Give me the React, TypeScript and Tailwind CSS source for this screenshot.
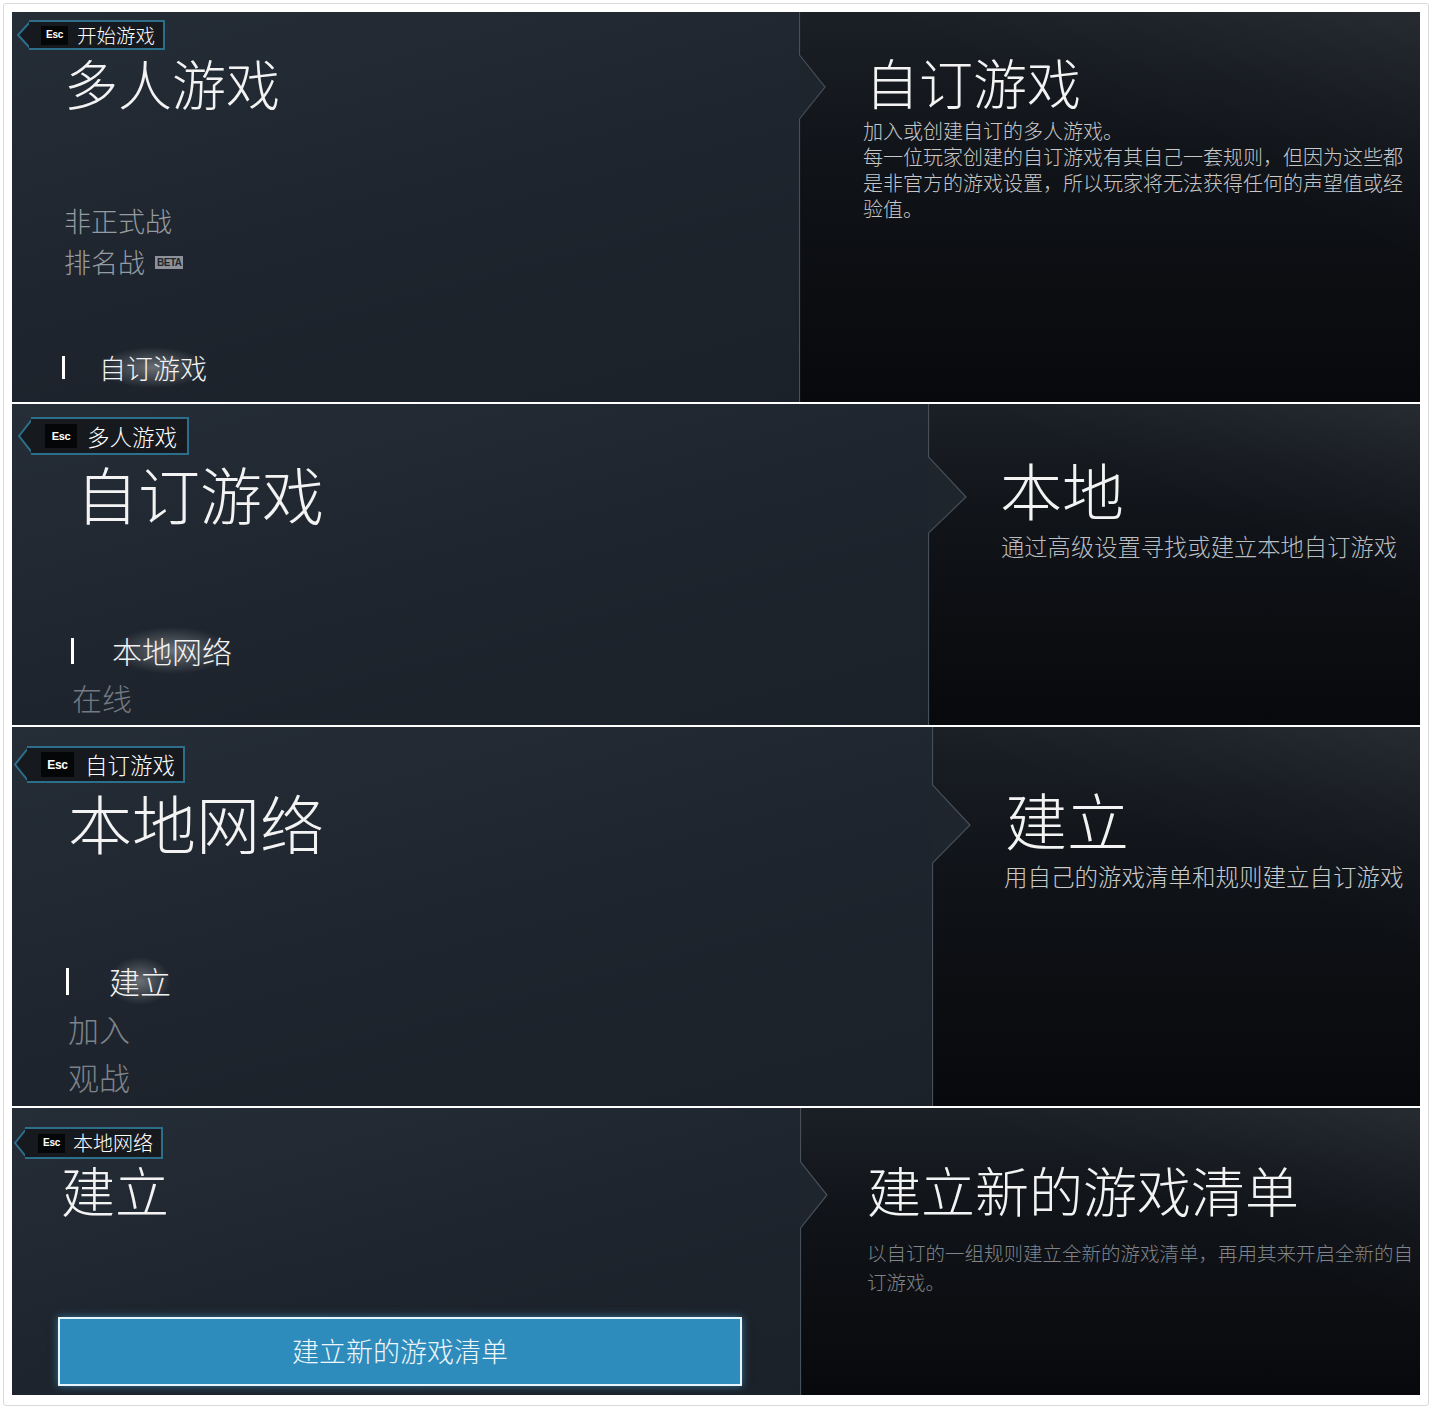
import { FC } from "react";

const FONT = "font-['Noto_Sans_CJK_SC','Noto_Sans',sans-serif]";
const LEFT_BG =
  "bg-[linear-gradient(165deg,#252d37_0%,#1e252e_50%,#1b2129_100%)]";
const RIGHT_BG =
  "bg-[image:linear-gradient(205deg,rgba(255,255,255,0.05)_0%,rgba(255,255,255,0.015)_22%,transparent_38%),linear-gradient(180deg,#1b2026_0%,#101318_38%,#08090c_100%)]";
const GLOW =
  "bg-[radial-gradient(closest-side,rgba(255,255,255,0.34),rgba(255,255,255,0))]";

interface EscTagProps {
  label: string;
  height: number;
  arrowW: number;
  wrapCls: string;
  boxCls: string;
  escCls: string;
  labelCls: string;
}

const EscTag: FC<EscTagProps> = ({
  label,
  height,
  arrowW,
  wrapCls,
  boxCls,
  escCls,
  labelCls,
}) => {
  const pts = `${arrowW + 1},1 1,${height / 2} ${arrowW + 1},${height - 1}`;
  return (
    <div className={`flex items-stretch ${wrapCls}`}>
      <svg
        width={arrowW}
        height={height}
        viewBox={`0 0 ${arrowW} ${height}`}
        className="-mr-px block shrink-0"
      >
        <polygon points={pts} fill="#161a1f" />
        <polyline
          points={pts}
          fill="none"
          stroke="#2d6e8b"
          strokeWidth="2"
        />
      </svg>
      <div
        className={`flex items-center border-y-2 border-r-2 border-[#2d6e8b] bg-[#161a1f] ${boxCls}`}
      >
        <span
          className={`flex items-center justify-center bg-[#050607] font-['Liberation_Sans',sans-serif] font-bold leading-none tracking-tight text-white ${escCls}`}
        >
          Esc
        </span>
        <span className={`leading-none text-white ${labelCls}`}>{label}</span>
      </div>
    </div>
  );
};

interface ChevronProps {
  h: number;
  y1: number;
  tipX: number;
  tipY: number;
  y2: number;
}

const Chevron: FC<ChevronProps> = ({ h, y1, tipX, tipY, y2 }) => (
  <svg
    className="pointer-events-none absolute left-0 top-0"
    width={tipX + 2}
    height={h}
  >
    <polygon points={`0,${y1} ${tipX},${tipY} 0,${y2}`} fill="#1e252d" />
    <polyline
      points={`0.5,0 0.5,${y1} ${tipX},${tipY} 0.5,${y2} 0.5,${h}`}
      fill="none"
      stroke="#474f58"
      strokeWidth="1.2"
    />
  </svg>
);

const Bar: FC<{ cls: string }> = ({ cls }) => (
  <span className={`inline-block shrink-0 bg-white ${cls}`}></span>
);

const App: FC = () => {
  return (
    <div className={`${FONT} h-[1409px] w-[1432px] bg-white p-[3px] font-light`}>
      <div className="h-[1403px] rounded-[3px] border border-[#dadada] p-[8px]">
        <div className="flex flex-col gap-[2px]">
          {/* 多人游戏 */}
          <section className="flex h-[390px]">
            <div className={`flex w-[787px] shrink-0 flex-col items-start ${LEFT_BG}`}>
              <EscTag
                label="开始游戏"
                height={30}
                arrowW={13}
                wrapCls="ml-[5px] mt-[8px] h-[30px]"
                boxCls="pl-[12px] pr-[8px] gap-[9px]"
                escCls="h-[19px] w-[27px] text-[10px]"
                labelCls="text-[19.5px]"
              />
              <h1 className="ml-[52px] mt-[3px] text-[54px] leading-[60px] text-[#f3f3f3]">
                多人游戏
              </h1>
              <div className="ml-[50px] mt-[87px] flex flex-col text-[27px] leading-[41px]">
                <span className="pl-[2px] text-[#959ba1]">非正式战</span>
                <span className="flex items-center pl-[2px] text-[#959ba1]">
                  排名战
                  <span className="ml-[10px] mt-[2px] bg-[#8c9297] px-[2px] font-['Liberation_Sans',sans-serif] text-[10px] font-bold leading-[13px] tracking-tighter text-[#1e252d]">
                    BETA
                  </span>
                </span>
                <span className="mt-[65px] flex items-center">
                  <Bar cls="h-[23px] w-[3px]" />
                  <span className={`ml-[34px] text-[#f2f2f2] ${GLOW}`}>自订游戏</span>
                </span>
              </div>
            </div>
            <div className={`relative flex-1 ${RIGHT_BG}`}>
              <Chevron h={390} y1={43} tipX={26} tipY={75} y2={107} />
              <div className="pl-[64px] pt-[40px]">
                <h2 className="ml-[2px] text-[54px] leading-[60px] text-[#f3f3f3]">
                  自订游戏
                </h2>
                <div className="mt-[6px] w-[548px] text-[20px] leading-[26px] text-[#c6c8ca]">
                  <p>加入或创建自订的多人游戏。</p>
                  <p>
                    每一位玩家创建的自订游戏有其自己一套规则，但因为这些都是非官方的游戏设置，所以玩家将无法获得任何的声望值或经验值。
                  </p>
                </div>
              </div>
            </div>
          </section>

          {/* 自订游戏 */}
          <section className="flex h-[321px]">
            <div className={`flex w-[916px] shrink-0 flex-col items-start ${LEFT_BG}`}>
              <EscTag
                label="多人游戏"
                height={38}
                arrowW={14}
                wrapCls="ml-[6px] mt-[13px] h-[38px]"
                boxCls="pl-[14px] pr-[10px] gap-[10px]"
                escCls="h-[24px] w-[32px] text-[11px]"
                labelCls="text-[22.5px]"
              />
              <h1 className="ml-[64px] mt-[3px] text-[62px] leading-[70px] text-[#f3f3f3]">
                自订游戏
              </h1>
              <div className="ml-[59px] mt-[99px] flex flex-col text-[30px] leading-[47px]">
                <span className="flex items-center">
                  <Bar cls="h-[26px] w-[3px]" />
                  <span className={`ml-[38px] text-[#f2f2f2] ${GLOW}`}>本地网络</span>
                </span>
                <span className="pl-[1px] text-[#737a81]">在线</span>
              </div>
            </div>
            <div className={`relative flex-1 ${RIGHT_BG}`}>
              <Chevron h={321} y1={53} tipX={38} tipY={93} y2={129} />
              <div className="pl-[72px] pt-[50px]">
                <h2 className="text-[62px] leading-[70px] text-[#f3f3f3]">本地</h2>
                <p className="ml-[1px] mt-[7px] text-[23.3px] leading-[30px] text-[#babdc0]">
                  通过高级设置寻找或建立本地自订游戏
                </p>
              </div>
            </div>
          </section>

          {/* 本地网络 */}
          <section className="flex h-[379px]">
            <div className={`flex w-[920px] shrink-0 flex-col items-start ${LEFT_BG}`}>
              <EscTag
                label="自订游戏"
                height={37}
                arrowW={14}
                wrapCls="ml-[2px] mt-[19px] h-[37px]"
                boxCls="pl-[14px] pr-[8px] gap-[11px]"
                escCls="h-[25px] w-[33px] text-[12px]"
                labelCls="text-[22.5px]"
              />
              <h1 className="ml-[56px] mt-[3px] text-[64px] leading-[70px] text-[#f3f3f3]">
                本地网络
              </h1>
              <div className="ml-[54px] mt-[101px] flex flex-col text-[31px] leading-[48px]">
                <span className="flex items-center">
                  <Bar cls="h-[27px] w-[3px]" />
                  <span className={`ml-[40px] text-[#f2f2f2] ${GLOW}`}>建立</span>
                </span>
                <span className="pl-[2px] text-[#7d8389]">加入</span>
                <span className="pl-[2px] text-[#7d8389]">观战</span>
              </div>
            </div>
            <div className={`relative flex-1 ${RIGHT_BG}`}>
              <Chevron h={379} y1={58} tipX={38} tipY={98} y2={136} />
              <div className="pl-[72px] pt-[57px]">
                <h2 className="ml-[1px] text-[62px] leading-[70px] text-[#f3f3f3]">建立</h2>
                <p className="mt-[7px] text-[23.5px] leading-[30px] text-[#c8cacc]">
                  用自己的游戏清单和规则建立自订游戏
                </p>
              </div>
            </div>
          </section>

          {/* 建立 */}
          <section className="flex h-[287px]">
            <div className={`flex w-[788px] shrink-0 flex-col items-start ${LEFT_BG}`}>
              <EscTag
                label="本地网络"
                height={32}
                arrowW={12}
                wrapCls="ml-[2px] mt-[19px] h-[32px]"
                boxCls="pl-[13px] pr-[8px] gap-[8px]"
                escCls="h-[19px] w-[27px] text-[10px]"
                labelCls="text-[20px]"
              />
              <h1 className="ml-[49px] mt-[1px] text-[54px] leading-[60px] text-[#f3f3f3]">
                建立
              </h1>
              <button className="ml-[46px] mt-[97px] flex h-[69px] w-[684px] items-center justify-center border-2 border-[#e6f4fb] bg-[#2e8cbc] text-[27px] font-light text-[#eef6fa] shadow-[0_0_8px_rgba(70,170,225,0.6)]">
                建立新的游戏清单
              </button>
            </div>
            <div className={`relative flex-1 ${RIGHT_BG}`}>
              <Chevron h={287} y1={54} tipX={27} tipY={87} y2={120} />
              <div className="pl-[67px] pt-[52px]">
                <h2 className="text-[54px] leading-[60px] text-[#f3f3f3]">建立新的游戏清单</h2>
                <p className="mt-[18px] w-[552px] text-[19.5px] leading-[29px] text-[#7f858b]">
                  以自订的一组规则建立全新的游戏清单，再用其来开启全新的自订游戏。
                </p>
              </div>
            </div>
          </section>
        </div>
      </div>
    </div>
  );
};

export default App;
